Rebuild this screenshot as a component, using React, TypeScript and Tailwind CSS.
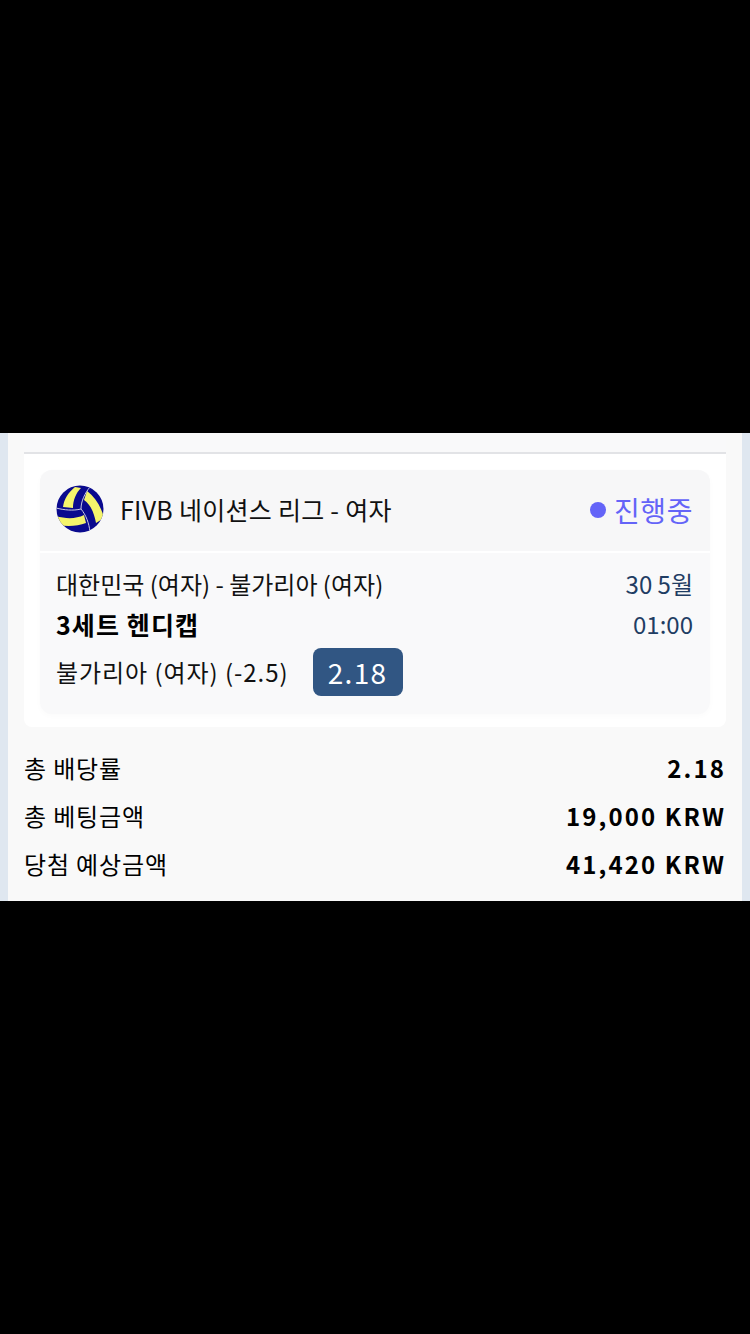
const font = { fontFamily: '"Noto Sans CJK KR", "Noto Sans", sans-serif' };

function Ball() {
  return (
    <svg viewBox="0 0 48 48" className="mb-[2px] h-12 w-12 shrink-0">
      <defs>
        <clipPath id="ball">
          <circle cx="24" cy="24" r="23.5" />
        </clipPath>
      </defs>
      <g clipPath="url(#ball)">
        <rect width="48" height="48" fill="#0a0a8e" />
        <path d="M7 22 C8 14 12 8 19 2 L25 3 C20 8 17 15 17 23 Z" fill="#f4f46c" />
        <path d="M31 6 C39 12 45 21 48 33 L40 38 C38 28 35 20 28 15 Z" fill="#f4f46c" />
        <path d="M0 31 C10 34 20 34 28 30 L30 38 C22 41 12 42 3 40 Z" fill="#f4f46c" />
        <path d="M25 24 C25 16 29 8 34 2 M25 24 C30 30 33 38 34 47 M25 24 C17 26 8 25 0 23" stroke="#c9c9e2" strokeWidth="1" fill="none" />
      </g>
    </svg>
  );
}

function Total({ label, value }: { label: string; value: string }) {
  return (
    <div className="flex h-12 items-center justify-between">
      <span className="text-[24px] leading-none tracking-[0.85px] text-black">{label}</span>
      <span className="text-[24px] font-bold leading-none tracking-[2.1px] text-black">{value}</span>
    </div>
  );
}

export default function App() {
  return (
    <div className="flex h-[1334px] w-[750px] flex-col bg-black" style={font}>
      <div className="h-[433px]" />
      <div className="h-[468px] bg-[#dfe7f0] px-2">
        <div className="h-full bg-[#f9f9f9] px-4">
          <div className="h-[294px] rounded-b-lg bg-white">
            <div className="h-[21px] border-b-2 border-[#e2e3e6] bg-[#f9f9fa]" />
            <div className="px-4 pt-4">
              <div className="h-[244px] rounded-xl bg-[#f9f9fa] shadow-[0_2px_6px_rgba(0,0,0,0.02)]">
                <div className="flex h-[83px] items-center justify-between rounded-t-xl border-b-2 border-white bg-[#f7f7f8] pb-[2px] pl-4 pr-[17px]">
                  <div className="flex items-center gap-4">
                    <Ball />
                    <span className="text-[25px] tracking-[0.28px] text-[#111]">FIVB 네이션스 리그 - 여자</span>
                  </div>
                  <div className="flex items-center gap-2">
                    <span className="h-4 w-4 rounded-full bg-[#6464f8]" />
                    <span className="text-[28px] leading-none tracking-[0.6px] text-[#6464f8]">진행중</span>
                  </div>
                </div>
                <div className="flex justify-between pl-4 pr-[17px] pt-[11px]">
                  <div>
                    <div className="flex h-[40px] items-center text-[24px] text-[#111]">대한민국 (여자) - 불가리아 (여자)</div>
                    <div className="flex h-[41px] items-center text-[25px] font-bold tracking-[1.1px] text-black">3세트 헨디캡</div>
                    <div className="mt-[3px] flex items-center gap-[24px]">
                      <span className="text-[24px] tracking-[0.95px] text-[#111]">불가리아 (여자) (-2.5)</span>
                      <span className="flex h-12 w-[90px] items-center justify-center rounded-lg bg-[#315683] text-[28px] tracking-[1.3px] text-white">2.18</span>
                    </div>
                  </div>
                  <div className="text-right text-[24px] text-[#1f3d63]">
                    <div className="flex h-[40px] items-center justify-end">30 5월</div>
                    <div className="flex h-[40px] items-center justify-end">01:00</div>
                  </div>
                </div>
              </div>
            </div>
          </div>
          <div className="pt-[17px]">
            <Total label="총 배당률" value="2.18" />
            <Total label="총 베팅금액" value="19,000 KRW" />
            <Total label="당첨 예상금액" value="41,420 KRW" />
          </div>
        </div>
      </div>
    </div>
  );
}
